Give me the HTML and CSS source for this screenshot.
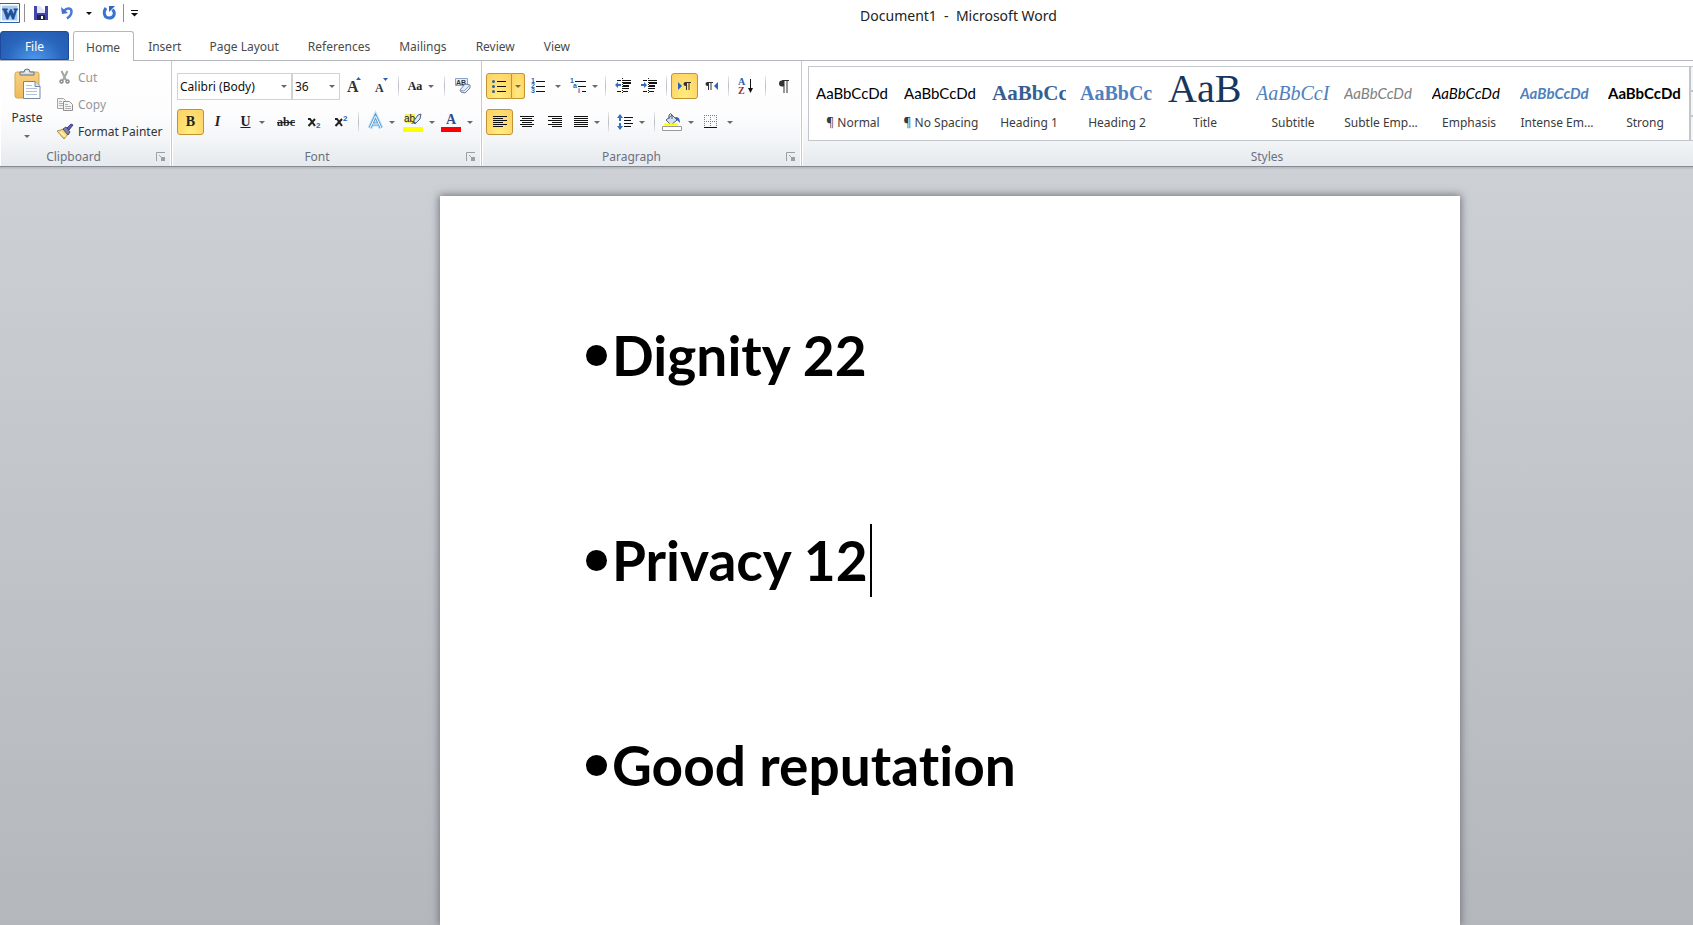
FILE: index.html
```html
<!DOCTYPE html>
<html lang="en">
<head>
<meta charset="utf-8">
<title>Document1 - Microsoft Word</title>
<link rel="stylesheet" href="styles.css">
</head>
<body>
<svg class="defs" aria-hidden="true">
  <defs>
    <linearGradient id="blue" x1="0" y1="0" x2="1" y2="1"><stop offset="0" stop-color="#8fbcf0"/><stop offset="1" stop-color="#1f4fb0"/></linearGradient>
    <linearGradient id="gold" x1="0" y1="0" x2="0" y2="1"><stop offset="0" stop-color="#f8d083"/><stop offset="1" stop-color="#eebb5c"/></linearGradient>
    <symbol id="launch" viewBox="0 0 10 10"><path d="M.5 9V.5H9" fill="none" stroke="#9a9ea5"/><path d="M5 5h4v4H5z" fill="#9a9ea5"/><path d="M3 3l5 5" fill="none" stroke="#9a9ea5"/></symbol>
  </defs>
</svg>
<header class="titlebar">
  <div class="quick">
    <svg class="logo" width="20" height="20" viewBox="0 0 20 20"><path d="M0 .5H19.500v19H0" fill="#dcebfa" stroke="#2c62a8"/><path d="M2 3h15v14H2z" fill="#a9cdf1"/><path d="M1.500 1.500h17v17h-17z" fill="none" stroke="#fff"/><text x="10" y="16" text-anchor="middle" class="logo-letter">W</text></svg>
    <i class="qsep"></i>
    <button class="q save" aria-label="Save"><svg width="14" height="14" viewBox="0 0 14 14"><path d="M0 0h14v14H0z" fill="#4644a8"/><path d="M3 0h8v7H3z" fill="#fff"/><path d="M3 0h3l5 5v2H3z" fill="#dfe6fa"/><path d="M3 9h8v5H3z" fill="#20224f"/><path d="M7 10h2v3H7z" fill="#fff"/></svg></button>
    <button class="q undo" aria-label="Undo"><svg width="13" height="14" viewBox="0 0 13 14"><path d="M3 5C6 1 10.500 2 10.500 5.500C10.500 8 9 10.500 6 12.500" fill="none" stroke="#4a7bd6" stroke-width="2.500"/><path d="M0 1l1 7 6-1z" fill="#3f6fca"/></svg></button>
    <button class="q" aria-label="Undo list"><i class="arrow dark"></i></button>
    <button class="q redo" aria-label="Repeat"><svg width="13" height="14" viewBox="0 0 13 14"><path d="M3 2C0 6 1 12 6 12S13 7 9.500 3.500" fill="none" stroke="#3a74d2" stroke-width="3"/><path d="M6 0h6l-6 6z" fill="#2f65c4"/></svg></button>
    <i class="qsep"></i>
    <button class="q" aria-label="Customize toolbar"><svg width="7" height="7" viewBox="0 0 7 7"><path d="M0 .5h7" stroke="#111"/><path d="M0 3h7L3.500 6.500z" fill="#111"/></svg></button>
  </div>
  <h1 class="title">Document1 &nbsp;-&nbsp; Microsoft Word</h1>
</header>

<nav class="tabs">
  <button class="file">File</button>
  <button class="tab active">Home</button>
  <button class="tab">Insert</button>
  <button class="tab">Page Layout</button>
  <button class="tab">References</button>
  <button class="tab">Mailings</button>
  <button class="tab">Review</button>
  <button class="tab">View</button>
</nav>

<div class="ribbon">
  <section class="group clipboard">
    <div class="body">
      <button class="paste">
        <svg width="28" height="32" viewBox="0 0 28 32"><rect x="1" y="3" width="24" height="26" rx="2" fill="url(#gold)" stroke="#d9a64e"/><path d="M6 6V3h4q0-3 3-3t3 3h4v3z" fill="#d5dbe1" stroke="#68737f"/><circle cx="13" cy="3" r="1" fill="#fff"/><path d="M9.500 12.500H21l5 5v12H9.500z" fill="#fff" stroke="#7088a6"/><path d="M21 12.500v5h5" fill="#dce6f2" stroke="#7088a6"/><path d="M12 16.500h6M12 19.500h11M12 22.500h11M12 25.500h11" stroke="#b2c2d6"/></svg>
        <span>Paste</span><i class="arrow"></i>
      </button>
      <div class="clip-list">
        <button class="line muted"><svg width="16" height="16" viewBox="0 0 16 16"><path d="M4.500 1L9 10M10.500 1L6 10" stroke="#a2a5a9" stroke-width="2"/><circle cx="4.500" cy="11.500" r="1.500" fill="none" stroke="#85888c" stroke-width="1.500"/><circle cx="10.500" cy="11.500" r="1.500" fill="none" stroke="#85888c" stroke-width="1.500"/></svg>Cut</button>
        <button class="line muted"><svg width="16" height="16" viewBox="0 0 16 16"><path d="M.5 1.500h6l2 2v8h-8z" fill="#f2f2f2" stroke="#a4a4a4"/><path d="M6.500 4.500h6l3 3v6h-9z" fill="#f5f5f5" stroke="#909090"/><path d="M2 4.500h3M2 6.500h4M2 8.500h4M8 7.500h3M8 9.500h6M8 11.500h6" stroke="#b0b0b0"/></svg>Copy</button>
        <button class="line"><svg width="16" height="16" viewBox="0 0 16 16"><path d="M0 7l7-2 4 5-4 5z" fill="#f3d57c" stroke="#b58f3f"/><path d="M3 9l5 4 1-1-5-5z" fill="#fff3b8"/><path d="M6 5l3-2 4 5-2 3z" fill="#7d7fa6" stroke="#4b4c78"/><path d="M10 4l4-4 2 1-4 5z" fill="#5d60ad" stroke="#3c3f86"/></svg>Format Painter</button>
      </div>
    </div>
    <footer class="foot"><span>Clipboard</span><button class="launcher" aria-label="Clipboard options"><svg width="10" height="10"><use href="#launch"/></svg></button></footer>
  </section>

  <section class="group font">
    <div class="body rows">
      <div class="row font-a">
        <label class="combo"><select aria-label="Font"><option>Calibri (Body)</option></select><i class="arrow"></i></label>
        <label class="combo"><select aria-label="Font size"><option>36</option></select><i class="arrow"></i></label>
        <button class="b" aria-label="Grow font"><svg width="14" height="18" viewBox="0 0 14 18"><text x="0" y="15" class="glyph s16">A</text><path d="M9 3h5l-2.500-3z" fill="#2d5fb4"/></svg></button>
        <button class="b" aria-label="Shrink font"><svg width="13" height="18" viewBox="0 0 13 18"><text x="0" y="15" class="glyph s12">A</text><path d="M8 1h5l-2.500 3z" fill="#2d5fb4"/></svg></button>
        <i class="sep"></i>
        <button class="b split" aria-label="Change case"><span class="glyph s12">Aa</span><i class="arrow"></i></button>
        <i class="sep"></i>
        <button class="b" aria-label="Clear formatting"><svg width="17" height="18" viewBox="0 0 17 18"><path d="M1.500 1.500h12v7h-12z" fill="#e6effb" stroke="#8aa2c8"/><text x="2" y="8" class="tiny">AB</text><path d="M6 13l5-6 5 1v3l-5 5-4-1z" fill="#e8edf6" stroke="#6b7ea6"/><path d="M6 13l4 1 6-6" fill="none" stroke="#8fa0c0"/></svg></button>
      </div>
      <div class="row font-b">
        <button class="b on" aria-label="Bold"><span class="glyph s14">B</span></button>
        <button class="b" aria-label="Italic"><span class="glyph s14 it">I</span></button>
        <button class="b split" aria-label="Underline"><span class="glyph s14 ul">U</span><i class="arrow"></i></button>
        <button class="b" aria-label="Strikethrough"><span class="glyph s12 st">abc</span></button>
        <button class="b" aria-label="Subscript"><svg width="14" height="16" viewBox="0 0 14 16"><path d="M1 5h2l5 7M8 5L1.500 12" fill="none" stroke="#222" stroke-width="2"/><text x="9" y="14" class="num">2</text></svg></button>
        <button class="b" aria-label="Superscript"><svg width="14" height="16" viewBox="0 0 14 16"><path d="M1 5h2l5 7M8 5L1.500 12" fill="none" stroke="#222" stroke-width="2"/><text x="9" y="7" class="num">2</text></svg></button>
        <i class="sep"></i>
        <button class="b split" aria-label="Text effects"><svg width="15" height="18" viewBox="0 0 15 18"><path d="M2 15L7.500 3 13 15M4.500 11h6" fill="none" stroke="#c5e6f8" stroke-width="5"/><path d="M2 15L7.500 3 13 15M4.500 11h6" fill="none" stroke="#5ba0d8" stroke-width="3"/><path d="M2 15L7.500 3 13 15M4.500 11h6" fill="none" stroke="#fff" stroke-width="1"/></svg><i class="arrow"></i></button>
        <button class="b split" aria-label="Highlight"><svg width="20" height="20" viewBox="0 0 20 20"><path d="M2 2h10v9H2z" fill="#f3ee68"/><text x="1" y="10" class="ab">ab</text><path d="M10 10l5-7 3-1-1 5-5 5z" fill="#dfe7f3" stroke="#48638f"/><path d="M8 12l3-3 2 2z" fill="#41526f"/><path d="M0 15h20v5H0z" fill="#ff0"/></svg><i class="arrow"></i></button>
        <button class="b split" aria-label="Font color"><svg width="20" height="20" viewBox="0 0 20 20"><text x="10" y="12" text-anchor="middle" class="glyph s14 navy">A</text><path d="M0 15h20v5H0z" fill="#f00"/></svg><i class="arrow"></i></button>
      </div>
    </div>
    <footer class="foot"><span>Font</span><button class="launcher" aria-label="Font options"><svg width="10" height="10"><use href="#launch"/></svg></button></footer>
  </section>

  <section class="group para">
    <div class="body rows">
      <div class="row para-a">
        <div class="pair"><button class="b on" aria-label="Bullets"><svg width="14" height="14" viewBox="0 0 14 14"><path d="M5 2.500h9M5 7.500h9M5 12.500h9" stroke="#111"/><g fill="#2d5fa8"><circle cx="1.500" cy="2.500" r="1.500"/><circle cx="1.500" cy="7.500" r="1.500"/><circle cx="1.500" cy="12.500" r="1.500"/></g></svg></button><button class="b on" aria-label="Bullet library"><i class="arrow"></i></button></div>
        <button class="b split wide" aria-label="Numbering"><svg width="14" height="16" viewBox="0 0 14 16"><path d="M5 3.500h9M5 8.500h9M5 13.500h9" stroke="#111"/><text y="5" class="mini">1</text><text y="10" class="mini">2</text><text y="15" class="mini">3</text></svg><i class="arrow"></i></button>
        <button class="b split" aria-label="Multilevel list"><svg width="16" height="16" viewBox="0 0 16 16"><path d="M5 3.500h11M8 8.500h8M12 13.500h4" stroke="#111"/><text y="5" class="mini">1</text><text x="3" y="10" class="mini">a</text><text x="8" y="15" class="mini">i</text></svg><i class="arrow"></i></button>
        <i class="sep"></i>
        <button class="b" aria-label="Decrease indent"><svg width="16" height="16" viewBox="0 0 16 16"><path d="M2 2.500h4M8 2.500h8M8 10.500h6M2 13.500h4M8 13.500h5" stroke="#111"/><path d="M8 5h8M8 8h6" stroke="#111" stroke-width="2"/><path d="M7.500 0v16" stroke="#222" stroke-dasharray="1 1"/><path d="M0 7l3-3v2h3v2H3v2z" fill="#2d6ccb"/></svg></button>
        <button class="b" aria-label="Increase indent"><svg width="16" height="16" viewBox="0 0 16 16"><path d="M2 2.500h4M8 2.500h8M8 10.500h6M2 13.500h4M8 13.500h5" stroke="#111"/><path d="M8 5h8M8 8h6" stroke="#111" stroke-width="2"/><path d="M7.500 0v16" stroke="#222" stroke-dasharray="1 1"/><path d="M6 7L3 4v2H0v2h3v2z" fill="#2d6ccb"/></svg></button>
        <i class="sep"></i>
        <button class="b on" aria-label="Left-to-right"><svg width="13" height="12" viewBox="0 0 13 12"><path d="M0 2l4 4-4 4z" fill="#2b62c0"/><path d="M9 2H7.500a2 2 0 000 4H9z" fill="#333"/><path d="M7 2.500h6M8.500 2v8M11 2v8" stroke="#333"/></svg></button>
        <button class="b" aria-label="Right-to-left"><svg width="13" height="12" viewBox="0 0 13 12"><path d="M13 2L9 6l4 4z" fill="#2b62c0"/><path d="M4 2H2.500a2 2 0 000 4H4z" fill="#333"/><path d="M2 2.500h6M3.500 2v8M6 2v8" stroke="#333"/></svg></button>
        <i class="sep"></i>
        <button class="b" aria-label="Sort"><svg width="16" height="18" viewBox="0 0 16 18"><text x="0" y="8" class="sort blue">A</text><text x="0" y="17" class="sort red">Z</text><path d="M12.500 2v11" stroke="#111" stroke-width="1"/><path d="M10 11h5l-2.500 5z" fill="#111"/></svg></button>
        <i class="sep"></i>
        <button class="b" aria-label="Show marks"><svg width="10" height="13" viewBox="0 0 10 13"><path d="M5 .5H3a3 3 0 000 6h2z" fill="#333"/><path d="M3 .5h7M5 0v13M8 0v13" stroke="#333"/></svg></button>
      </div>
      <div class="row para-b">
        <button class="b on" aria-label="Align left"><svg width="14" height="12" viewBox="0 0 14 12"><path d="M0 .5h14M0 2.500h10M0 4.500h14M0 6.500h10M0 8.500h14M0 10.500h10" stroke="#111"/></svg></button>
        <button class="b" aria-label="Center"><svg width="14" height="12" viewBox="0 0 14 12"><path d="M0 .5h14M2 2.500h10M0 4.500h14M2 6.500h10M0 8.500h14M2 10.500h10" stroke="#111"/></svg></button>
        <button class="b" aria-label="Align right"><svg width="14" height="12" viewBox="0 0 14 12"><path d="M0 .5h14M4 2.500h10M0 4.500h14M4 6.500h10M0 8.500h14M4 10.500h10" stroke="#111"/></svg></button>
        <button class="b split" aria-label="Justify"><svg width="14" height="12" viewBox="0 0 14 12"><path d="M0 .5h14M0 2.500h14M0 4.500h14M0 6.500h14M0 8.500h14M0 10.500h14" stroke="#111"/></svg><i class="arrow"></i></button>
        <i class="sep"></i>
        <button class="b split" aria-label="Line spacing"><svg width="16" height="16" viewBox="0 0 16 16"><path d="M7 3.500h9M7 6.500h7M7 9.500h9M7 12.500h7" stroke="#111"/><path d="M0 4l3-4 3 4H4v3H2V4zM0 12l3 4 3-4H4V9H2v3z" fill="#3a6cc0"/></svg><i class="arrow"></i></button>
        <i class="sep"></i>
        <button class="b split" aria-label="Shading"><svg width="20" height="18" viewBox="0 0 20 18"><path d="M4 7l6-5 5 5-6 5z" fill="#d5dfec" stroke="#4b5c78"/><path d="M7 6V2q2-3 3 0v4" fill="none" stroke="#4b5c78"/><path d="M13 4q5-1 5 6l-3-3z" fill="#2d62bd"/><path d="M2 11.500h14" stroke="#ff0" stroke-width="2"/><path d="M.5 13.500h19v4H.5z" fill="#fff" stroke="#999"/></svg><i class="arrow"></i></button>
        <button class="b split wide" aria-label="Borders"><svg width="13" height="14" viewBox="0 0 13 14"><path d="M0 .5h13M0 6.500h13M.5 0v12M6.500 0v12M12.500 0v12" stroke="#70809a" stroke-dasharray="1 1"/><path d="M0 12.500h13" stroke="#111"/></svg><i class="arrow"></i></button>
      </div>
    </div>
    <footer class="foot"><span>Paragraph</span><button class="launcher" aria-label="Paragraph options"><svg width="10" height="10"><use href="#launch"/></svg></button></footer>
  </section>

  <section class="group styles">
    <div class="body">
      <div class="gallery">
        <button class="style"><span class="sample">AaBbCcDd</span><span class="name">¶ Normal</span></button>
        <button class="style"><span class="sample">AaBbCcDd</span><span class="name">¶ No Spacing</span></button>
        <button class="style"><span class="sample h1">AaBbCc</span><span class="name">Heading 1</span></button>
        <button class="style"><span class="sample h2">AaBbCc</span><span class="name">Heading 2</span></button>
        <button class="style"><span class="sample big">AaB</span><span class="name">Title</span></button>
        <button class="style"><span class="sample sub">AaBbCcI</span><span class="name">Subtitle</span></button>
        <button class="style"><span class="sample subtle">AaBbCcDd</span><span class="name">Subtle Emp...</span></button>
        <button class="style"><span class="sample emph">AaBbCcDd</span><span class="name">Emphasis</span></button>
        <button class="style"><span class="sample intense">AaBbCcDd</span><span class="name">Intense Em...</span></button>
        <button class="style"><span class="sample strong">AaBbCcDd</span><span class="name">Strong</span></button>
      </div>
      <div class="scrolls"><button aria-label="Previous styles"></button><button aria-label="Next styles"></button><button aria-label="More styles"></button></div>
    </div>
    <footer class="foot"><span>Styles</span></footer>
  </section>
</div>

<main class="workspace">
  <article class="page">
    <ul class="bullets">
      <li>Dignity 22</li>
      <li>Privacy 12<i class="caret"></i></li>
      <li>Good reputation</li>
    </ul>
  </article>
</main>
</body>
</html>
```
FILE: styles.css
```css
* { box-sizing: border-box; }
body {
  margin: 0;
  height: 100vh;
  overflow: hidden;
  display: flex;
  flex-direction: column;
  background: #fff;
  color: #3b3b3b;
  font: 12px/16px "Noto Sans", "Open Sans", sans-serif;
}
button, select { font: inherit; color: inherit; background: none; border: 0; padding: 0; margin: 0; }
svg { display: block; flex: none; overflow: visible; }
.defs { position: absolute; width: 0; height: 0; }

.titlebar { display: flex; height: 31px; }
.quick { display: flex; align-items: center; width: 224px; height: 26px; }
.logo-letter { font: bold 15px "Liberation Serif", serif; fill: #1c4f9c; stroke: #1c4f9c; }
.qsep { width: 1px; height: 18px; margin: 0 4px; background: #8e8e8e; }
.q { display: flex; justify-content: center; align-items: center; width: 16px; height: 20px; }
.save { width: 24px; }
.undo { width: 28px; }
.redo { width: 24px; }
.quick .q + .qsep { margin: 0 2px; }
.title { flex: 1; margin: 0; text-align: center; color: #222; font-size: 14px; font-weight: 400; line-height: 31px; }

.arrow { flex: none; width: 0; height: 0; border: 3px solid transparent; border-top-color: #6a6a6a; border-bottom: 0; }
.arrow.dark { border-top-color: #111; }

.tabs { display: flex; height: 30px; border-bottom: 1px solid #b4b8be; background: #fff; }
.file { width: 69px; margin-right: 4px; border: 1px solid #1e4a9c; border-radius: 3px 3px 0 0; color: #fff; background: radial-gradient(ellipse at 50% 110%, #4f9cf0 0, #2a66bd 60%, #2259ad 100%); }
.file, .tab { padding: 2px 14px 0; }
.tab { color: #4a4a4a; }
.tab + .tab + .tab { padding: 2px 15px 0 14px; }
.tab.active { height: 30px; padding: 2px 13px 0 12px; border: 1px solid #b4b8be; border-bottom: 0; border-radius: 3px 3px 0 0; background: #fff; }

.ribbon {
  display: flex;
  flex: none;
  height: 106px;
  border-bottom: 1px solid #868b93;
  background: linear-gradient(#fff 0, #fdfdfe 50%, #f3f5f7 75%, #e6e9ed 100%);
}
.group { display: flex; flex-direction: column; flex: none; border-right: 1px solid #c6cad0; box-shadow: inset -1px 0 #fff, inset 1px 0 #fff; }
.body { display: flex; flex: 1; }
.clipboard { width: 172px; }
.font { width: 310px; padding-left: 5px; }
.para { width: 320px; padding-left: 4px; }
.styles { flex: 1 0 939px; padding-left: 6px; }
.foot { display: flex; align-items: center; justify-content: center; height: 18px; padding: 0 5px 0 0; color: #6b7080; }
.foot span { flex: 1; padding-right: 9px; text-align: center; }
.foot .launcher { width: 10px; height: 10px; }

.paste { display: flex; flex-direction: column; align-items: center; width: 54px; padding-top: 8px; gap: 9px; color: #333; }
.paste svg { margin-left: 2px; }
.clip-list { display: flex; flex-direction: column; padding: 3px 0 0 3px; }
.line { display: flex; align-items: center; gap: 5px; height: 27px; color: #333; }
.muted { color: #979797; }

.rows { flex-direction: column; gap: 10px; padding-top: 12px; }
.row { display: grid; height: 26px; }
.font-a { grid-template-columns: 115px 48px 28px 26px 8px 38px 8px 28px; }
.font-b { grid-template-columns: 27px 27px 41px 28px 28px 26px 8px 38px 38px 38px; }
.para-a { grid-template-columns: 39px 42px 33px 10px 26px 26px 9px 27px 26px 8px 28px 10px 28px; }
.para-b { grid-template-columns: 27px 28px 28px 35px 8px 38px 8px 40px 40px; }
.b { display: flex; align-items: center; justify-content: center; height: 26px; }
.split { gap: 6px; }
.wide { gap: 10px; }
.on { border: 1px solid #c29333; border-radius: 3px; background: radial-gradient(ellipse at 50% 100%, #ffee80 0, #ffdc6e 60%, #fcd066 100%); }
.pair { display: grid; grid-template-columns: 26px 13px; }
.pair .on:first-child { border-radius: 3px 0 0 3px; }
.pair .on:last-child { border-left: 0; border-radius: 0 3px 3px 0; }
.sep { width: 1px; height: 20px; margin: 3px auto; background: linear-gradient(#e8eaed, #b9bdc4, #e8eaed); }

.combo { display: grid; align-items: center; height: 27px; border: 1px solid #cfd2d6; background: #fff; color: #111; }
.combo select { grid-area: 1 / 1; width: 100%; height: 24px; padding-left: 2px; appearance: none; outline: 0; }
.combo .arrow { grid-area: 1 / 1; justify-self: end; margin-right: 4px; pointer-events: none; }

.glyph { font-family: "Liberation Serif", serif; font-weight: bold; color: #222; fill: #333; line-height: 16px; }
.s12 { font-size: 12px; }
.s14 { font-size: 14px; }
.s16 { font-size: 16px; }
.it { font-style: italic; }
.ul { text-decoration: underline; padding: 0 2px; }
.st { text-decoration: line-through; }
.navy { fill: #2f4f8c; }
.tiny { font: bold 7px "Liberation Sans", sans-serif; fill: #333; }
.num { font: bold 8px "Liberation Sans", sans-serif; fill: #2d5fb4; }
.ab { font: 10px "Liberation Sans", sans-serif; fill: #222; }
.mini { font: bold 7px "Liberation Sans", sans-serif; fill: #2d5fa8; }
.sort { font: bold 10px "Liberation Serif", serif; }
.blue { fill: #2d5fa8; }
.red { fill: #96303c; }

.gallery { display: flex; flex: none; height: 75px; margin-top: 5px; border: 1px solid #c3c6ca; background: #fff; }
.style { display: flex; flex-direction: column; width: 88px; padding: 0 7px; color: #3b3b3b; }
.sample { display: block; width: 74px; height: 48px; overflow: hidden; white-space: nowrap; text-align: left; color: #000; font: 15px/42px Lato, sans-serif; padding-top: 5px; }
.name { width: 74px; display: flex; justify-content: center; white-space: nowrap; }
.h1, .h2, .big, .sub { font-family: "Liberation Serif", serif; }
.h1 { font-size: 21px; font-weight: bold; color: #365f91; }
.h2 { font-size: 20px; font-weight: bold; color: #4f81bd; }
.big { font-size: 40px; color: #17365d; line-height: 34px; }
.sub { font-size: 20px; font-style: italic; color: #4f81bd; }
.subtle { font-style: italic; color: #808080; }
.emph { font-style: italic; }
.intense { font-style: italic; font-weight: bold; color: #4f81bd; }
.strong { font-weight: bold; }
.scrolls { display: grid; width: 17px; height: 75px; margin-top: 5px; }
.scrolls button { border: 1px solid #c3c6ca; background: #f4f5f7; }

.workspace {
  flex: 1;
  min-height: 0;
  padding: 29px 0 0 440px;
  background: linear-gradient(#b4b7bc, transparent 3px), linear-gradient(#cdd0d5, #b4b7bc);
}
.page { max-width: 1020px; height: 100%; padding: 107px 144px 0; background: #fff; box-shadow: 0 0 8px 1px #70747b; }
.bullets { list-style: none; margin: 0; padding: 0; color: #000; font: bold 55px/105px Lato, sans-serif; font-variant-ligatures: none; }
.bullets li { display: flex; align-items: center; gap: 5px; height: 105px; margin-bottom: 100px; }
.bullets li::before { content: ""; width: 21px; height: 21px; margin-left: 2px; border-radius: 50%; background: #000; }
.caret { width: 2px; height: 73px; margin-left: -3px; background: #000; }
```
